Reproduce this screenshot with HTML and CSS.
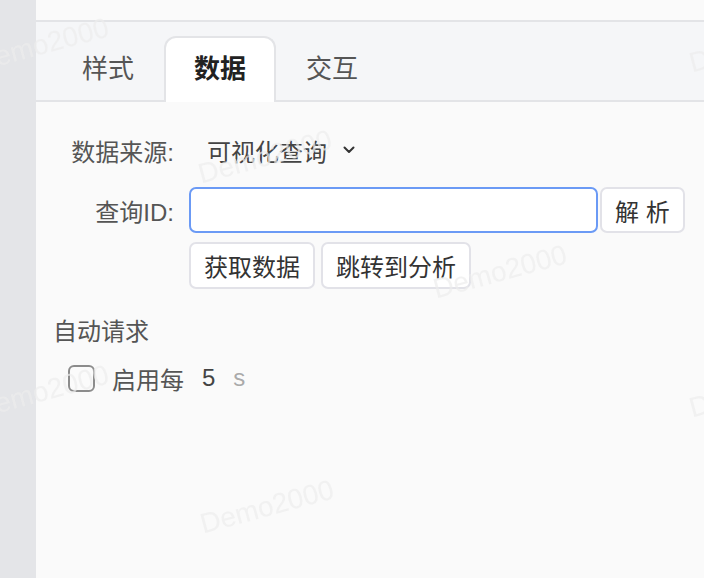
FILE: index.html
```html
<!DOCTYPE html>
<html lang="zh-CN">
<head>
    <meta charset="UTF-8">
    <meta name="viewport" content="width=device-width, initial-scale=1.0">
    <title>数据配置</title>
    <link rel="stylesheet" href="styles.css">
</head>
<body>
    <div class="app">
        <div class="sidebar"></div>

        <div class="main">
            <div class="topbar"></div>

            <div class="tabs">
                <div class="tab">样式</div>
                <div class="tab tab-active">数据</div>
                <div class="tab">交互</div>
            </div>

            <div class="form">
                <div class="row row-source">
                    <label class="label">数据来源:</label>
                    <div class="select">
                        <span>可视化查询</span>
                        <svg class="chevron" width="12" height="8" viewBox="0 0 12 8">
                            <polyline points="1.5,1.5 6,6 10.5,1.5" fill="none" stroke="#333" stroke-width="2" stroke-linecap="round" stroke-linejoin="round"/>
                        </svg>
                    </div>
                </div>

                <div class="row row-query">
                    <label class="label">查询ID:</label>
                    <input class="input" type="text">
                    <button class="btn btn-parse">解 析</button>
                </div>

                <div class="row row-actions">
                    <button class="btn">获取数据</button>
                    <button class="btn">跳转到分析</button>
                </div>

                <!-- Auto request -->
                <div class="section-title">自动请求</div>
                <div class="auto-row">
                    <span class="checkbox"></span>
                    <span class="auto-text">启用每</span>
                    <span class="auto-num">5</span>
                    <span class="auto-unit">s</span>
                </div>
            </div>
        </div>
    </div>

    <div class="watermark">
        <span class="wm wm-a">Demo2000</span>
        <span class="wm wm-b">Demo2000</span>
        <span class="wm wm-c">Demo2000</span>
        <span class="wm wm-d">Demo2000</span>
        <span class="wm wm-e">Demo2000</span>
        <span class="wm wm-f">Demo2000</span>
        <span class="wm wm-g">Demo2000</span>
    </div>
</body>
</html>
```

FILE: styles.css
```css
/* Global Styles */
body {
    margin: 0;
    padding: 0;
    font-family: 'Liberation Sans', 'Noto Sans CJK SC', sans-serif;
    background-color: #fafafa;
    color: #555;
    overflow: hidden;
}

.app {
    display: flex;
    height: 578px;
}

.sidebar {
    width: 36px;
    flex-shrink: 0;
    background-color: #e4e5e8;
}

.main {
    flex: 1;
    background-color: #fafafa;
}

.topbar {
    height: 20px;
    border-bottom: 2px solid #e3e4e7;
}

/* Tabs */
.tabs {
    display: flex;
    align-items: flex-end;
    height: 78px;
    padding-left: 16px;
    background-color: #f5f6f8;
    border-bottom: 2px solid #e3e4e7;
}

.tab {
    width: 112px;
    height: 64px;
    line-height: 66px;
    text-align: center;
    font-size: 26px;
    color: #555;
    box-sizing: border-box;
}

.tab-active {
    height: 66px;
    margin-bottom: -2px;
    background-color: #fff;
    border: 2px solid #e3e4e7;
    border-bottom: none;
    border-radius: 12px 12px 0 0;
    line-height: 62px;
    font-weight: bold;
    color: #222;
}

/* Form */
.form {
    padding: 24px 0 0 16px;
}

.row {
    display: flex;
    align-items: center;
}

.label {
    width: 122px;
    margin-right: 15px;
    text-align: right;
    font-size: 24px;
    color: #555;
}

.row-source {
    height: 48px;
    margin-bottom: 13px;
}

.select {
    display: flex;
    align-items: center;
    padding-left: 18px;
    font-size: 24px;
    color: #444;
}

.chevron {
    margin-left: 16px;
}

.row-query {
    height: 46px;
    margin-bottom: 9px;
}

.input {
    width: 409px;
    height: 46px;
    box-sizing: border-box;
    border: 2px solid #6b9af5;
    border-radius: 7px;
    background-color: #fff;
    outline: none;
    margin: 0;
}

.btn {
    height: 46px;
    padding: 0 13px;
    margin: 0;
    box-sizing: border-box;
    border: 2px solid #e2e2e8;
    border-radius: 7px;
    background-color: #fff;
    font-family: 'Liberation Sans', 'Noto Sans CJK SC', sans-serif;
    font-size: 24px;
    color: #333;
}

.btn-parse {
    margin-left: 2px;
}

.row-actions {
    padding-left: 137px;
    gap: 6px;
}

.row-actions .btn {
    height: 47px;
}

.section-title {
    margin-top: 27px;
    margin-left: 1px;
    font-size: 24px;
    line-height: 32px;
    color: #555;
}

.auto-row {
    display: flex;
    align-items: center;
    height: 32px;
    margin-top: 14px;
    padding-left: 16px;
    font-size: 24px;
}

.checkbox {
    width: 27px;
    height: 27px;
    box-sizing: border-box;
    border: 2px solid #8c8c8c;
    border-radius: 6px;
    background-color: #fbfbfb;
    margin-right: 17px;
}

.auto-text {
    color: #555;
    margin-right: 18px;
}

.auto-num {
    color: #444;
    margin-right: 18px;
}

.auto-unit {
    color: #aaa;
}

/* Watermark overlay */
.watermark {
    position: fixed;
    top: 0;
    left: 0;
    right: 0;
    bottom: 0;
    overflow: hidden;
    pointer-events: none;
}

.wm {
    position: absolute;
    font-family: 'Liberation Sans', sans-serif;
    font-size: 28px;
    color: rgba(236, 236, 236, 0.7);
    white-space: nowrap;
    transform: translate(-50%, -50%) rotate(-15deg);
}

.wm-a { left: 42px; top: 45px; }
.wm-b { left: 265px; top: 157px; }
.wm-c { left: 500px; top: 272px; }
.wm-d { left: 756px; top: 46px; }
.wm-e { left: 42px; top: 392px; }
.wm-f { left: 267px; top: 507px; }
.wm-g { left: 756px; top: 391px; }
```
